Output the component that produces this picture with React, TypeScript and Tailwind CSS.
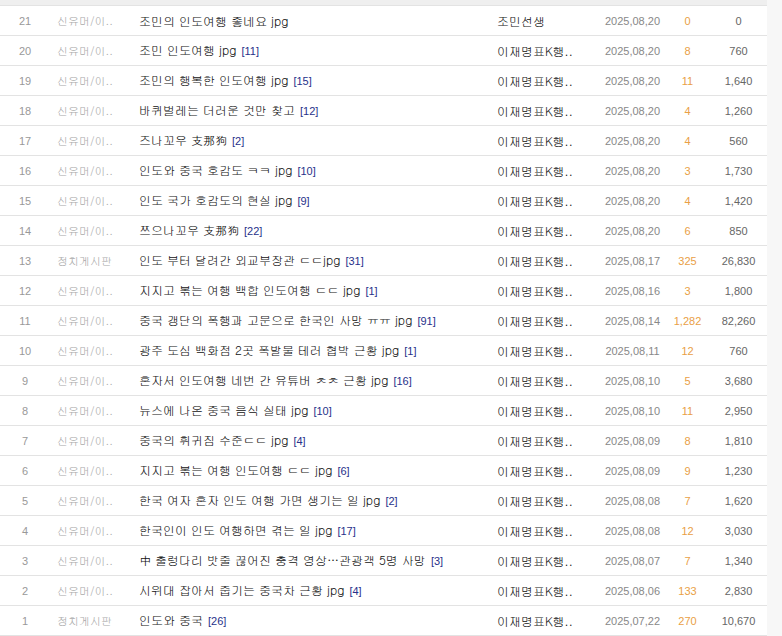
const KR = "font-['Gulim','Noto_Sans_CJK_KR',sans-serif]";

type Row = {
  no: number;
  cat: string;
  title: string;
  cmt?: number;
  author: string;
  date: string;
  rec: string;
  views: string;
};

const U = "신유머/이..";
const P = "정치게시판";
const A = "이재명표K행..";

const ROWS: Row[] = [
  { no: 21, cat: U, title: "조민의 인도여행 좋네요 jpg", author: "조민선생", date: "2025,08,20", rec: "0", views: "0" },
  { no: 20, cat: U, title: "조민 인도여행 jpg", cmt: 11, author: A, date: "2025,08,20", rec: "8", views: "760" },
  { no: 19, cat: U, title: "조민의 행복한 인도여행 jpg", cmt: 15, author: A, date: "2025,08,20", rec: "11", views: "1,640" },
  { no: 18, cat: U, title: "바퀴벌레는 더러운 것만 찾고", cmt: 12, author: A, date: "2025,08,20", rec: "4", views: "1,260" },
  { no: 17, cat: U, title: "즈나꼬우 支那狗", cmt: 2, author: A, date: "2025,08,20", rec: "4", views: "560" },
  { no: 16, cat: U, title: "인도와 중국 호감도 ㅋㅋ jpg", cmt: 10, author: A, date: "2025,08,20", rec: "3", views: "1,730" },
  { no: 15, cat: U, title: "인도 국가 호감도의 현실 jpg", cmt: 9, author: A, date: "2025,08,20", rec: "4", views: "1,420" },
  { no: 14, cat: U, title: "쯔으나꼬우 支那狗", cmt: 22, author: A, date: "2025,08,20", rec: "6", views: "850" },
  { no: 13, cat: P, title: "인도 부터 달려간 외교부장관 ㄷㄷjpg", cmt: 31, author: A, date: "2025,08,17", rec: "325", views: "26,830" },
  { no: 12, cat: U, title: "지지고 볶는 여행 백합 인도여행 ㄷㄷ jpg", cmt: 1, author: A, date: "2025,08,16", rec: "3", views: "1,800" },
  { no: 11, cat: U, title: "중국 갱단의 폭행과 고문으로 한국인 사망 ㅠㅠ jpg", cmt: 91, author: A, date: "2025,08,14", rec: "1,282", views: "82,260" },
  { no: 10, cat: U, title: "광주 도심 백화점 2곳 폭발물 테러 협박 근황 jpg", cmt: 1, author: A, date: "2025,08,11", rec: "12", views: "760" },
  { no: 9, cat: U, title: "혼자서 인도여행 네번 간 유튜버 ㅊㅊ 근황 jpg", cmt: 16, author: A, date: "2025,08,10", rec: "5", views: "3,680" },
  { no: 8, cat: U, title: "뉴스에 나온 중국 음식 실태 jpg", cmt: 10, author: A, date: "2025,08,10", rec: "11", views: "2,950" },
  { no: 7, cat: U, title: "중국의 휘귀짐 수준ㄷㄷ jpg", cmt: 4, author: A, date: "2025,08,09", rec: "8", views: "1,810" },
  { no: 6, cat: U, title: "지지고 볶는 여행 인도여행 ㄷㄷ jpg", cmt: 6, author: A, date: "2025,08,09", rec: "9", views: "1,230" },
  { no: 5, cat: U, title: "한국 여자 혼자 인도 여행 가면 생기는 일 jpg", cmt: 2, author: A, date: "2025,08,08", rec: "7", views: "1,620" },
  { no: 4, cat: U, title: "한국인이 인도 여행하면 겪는 일 jpg", cmt: 17, author: A, date: "2025,08,08", rec: "12", views: "3,030" },
  { no: 3, cat: U, title: "中 출렁다리 밧줄 끊어진 충격 영상…관광객 5명 사망", cmt: 3, author: A, date: "2025,08,07", rec: "7", views: "1,340" },
  { no: 2, cat: U, title: "시위대 잡아서 줍기는 중국차 근황 jpg", cmt: 4, author: A, date: "2025,08,06", rec: "133", views: "2,830" },
  { no: 1, cat: P, title: "인도와 중국", cmt: 26, author: A, date: "2025,07,22", rec: "270", views: "10,670" },
];

function BoardRow({ r }: { r: Row }) {
  return (
    <div className="flex items-center h-[30px] border-t border-[#e3e3e3]">
      <div className="w-[50px] text-center text-[11px] text-[#999] font-['Liberation_Sans',sans-serif]">{r.no}</div>
      <div className={`w-[82px] pl-[7px] text-[11px] text-[#aaa] whitespace-nowrap ${KR}`}>{r.cat}</div>
      <div className={`w-[358px] pl-[7px] text-[12px] text-[#111] whitespace-nowrap ${KR}`}>
        {r.title}
        {r.cmt !== undefined && (
          <span className="ml-[5px] text-[11px] text-[#27318a] font-['Liberation_Sans',sans-serif]">[{r.cmt}]</span>
        )}
      </div>
      <div className={`w-[110px] pl-[7px] text-[12px] text-[#111] whitespace-nowrap ${KR}`}>{r.author}</div>
      <div className="w-[65px] text-center text-[11px] text-[#888] font-['Liberation_Sans',sans-serif]">{r.date}</div>
      <div className="w-[45px] text-center text-[11px] text-[#e9a046] font-['Liberation_Sans',sans-serif]">{r.rec}</div>
      <div className="w-[57px] text-center text-[11px] text-[#666] font-['Liberation_Sans',sans-serif]">{r.views}</div>
    </div>
  );
}

export default function App() {
  return (
    <div className="w-[782px] h-[636px] bg-white overflow-hidden flex">
      <div className="w-[767px] leading-[16px]">
        <div className="h-[5px] bg-[#efefef]" />
        {ROWS.map((r) => (
          <BoardRow key={r.no} r={r} />
        ))}
        <div className="border-t border-[#e3e3e3]" />
      </div>
      <div className="flex-1 bg-[#f7f7f7]" />
    </div>
  );
}
